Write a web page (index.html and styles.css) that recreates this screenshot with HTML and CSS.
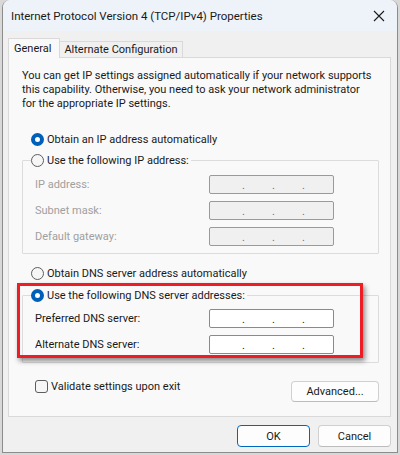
FILE: index.html
```html
<!DOCTYPE html>
<html lang="en">
<head>
    <meta charset="UTF-8">
    <meta name="viewport" content="width=device-width, initial-scale=1.0">
    <title>Internet Protocol Version 4 (TCP/IPv4) Properties</title>
    <link rel="stylesheet" href="styles.css">
</head>
<body>
    <div class="window">
        <div class="titlebar">
            <span class="title">Internet Protocol Version 4 (TCP/IPv4) Properties</span>
            <svg class="close" width="12" height="12" viewBox="0 0 12 12">
                <path d="M1 1L11 11M11 1L1 11" stroke="#1b1b1b" stroke-width="1.1" fill="none"/>
            </svg>
        </div>

        <div class="content">
            <div class="tabs">
                <div class="tab active">General</div>
                <div class="tab">Alternate Configuration</div>
            </div>

            <div class="panel">
                <p class="desc">You can get IP settings assigned automatically if your network supports<br>this capability. Otherwise, you need to ask your network administrator<br>for the appropriate IP settings.</p>

                <div class="option first"><span class="radio checked"></span>Obtain an IP address automatically</div>

                <fieldset class="group disabled">
                    <legend><span class="radio"></span>Use the following IP address:</legend>
                    <div class="field">
                        <span class="label">IP address:</span>
                        <span class="ip"><i>.</i><i>.</i><i>.</i></span>
                    </div>
                    <div class="field">
                        <span class="label">Subnet mask:</span>
                        <span class="ip"><i>.</i><i>.</i><i>.</i></span>
                    </div>
                    <div class="field">
                        <span class="label">Default gateway:</span>
                        <span class="ip"><i>.</i><i>.</i><i>.</i></span>
                    </div>
                </fieldset>

                <div class="option dns"><span class="radio"></span>Obtain DNS server address automatically</div>

                <fieldset class="group dns-group">
                    <legend><span class="radio checked"></span>Use the following DNS server addresses:</legend>
                    <div class="field">
                        <span class="label">Preferred DNS server:</span>
                        <span class="ip"><i>.</i><i>.</i><i>.</i></span>
                    </div>
                    <div class="field">
                        <span class="label">Alternate DNS server:</span>
                        <span class="ip"><i>.</i><i>.</i><i>.</i></span>
                    </div>
                </fieldset>

                <div class="panel-footer">
                    <div class="check-row"><span class="checkbox"></span>Validate settings upon exit</div>
                    <button class="btn advanced">Advanced...</button>
                </div>
            </div>

            <div class="buttons">
                <button class="btn primary">OK</button>
                <button class="btn">Cancel</button>
            </div>
        </div>

        <!-- annotation box around the DNS section -->
        <div class="highlight"></div>
    </div>
</body>
</html>
```

FILE: styles.css
```css
body {
    margin: 0;
    padding: 0;
    background-color: #d8d8d8;
    font-family: Roboto, "Noto Sans", sans-serif;
    font-size: 11px;
    color: #1a1a1a;
}

.window {
    position: relative;
    margin-left: 2px;
    width: 394px;
    height: 452px;
    background-color: #f0f0f0;
    border: 1px solid #8c8c8c;
    border-top: none;
    border-radius: 8px 8px 0 0;
    overflow: hidden;
}

.titlebar {
    height: 31px;
    background-color: #eef3f9;
    display: flex;
    align-items: center;
    justify-content: space-between;
    padding: 0 8px 0 8px;
}

.title {
    font-size: 11.5px;
    padding-top: 1px;
}

.close {
    margin-right: 4px;
    margin-top: 1px;
}

.content {
    padding: 7px 6px 0 5px;
}

.tabs {
    display: flex;
    align-items: flex-end;
    height: 19px;
}

.tab {
    height: 16px;
    line-height: 16px;
    padding: 0 4px 0 4px;
    border: 1px solid #d9d9d9;
    border-bottom: none;
    border-left: none;
    background-color: #f0f0f0;
    box-sizing: border-box;
}

.tab.active {
    position: relative;
    z-index: 1;
    height: 20px;
    line-height: 19px;
    margin-bottom: -1px;
    padding: 0 8px 0 5px;
    border-left: 1px solid #d9d9d9;
    background-color: #f9f9f9;
}

.panel {
    height: 360px;
    box-sizing: border-box;
    border: 1px solid #d9d9d9;
    background-color: #f9f9f9;
    padding: 11px 11px 0 13px;
}

.desc {
    margin: 0;
    line-height: 14px;
    white-space: nowrap;
}

.option {
    display: flex;
    align-items: center;
    height: 16px;
    padding-left: 9px;
}

.option.first {
    margin-top: 20px;
}

.option.dns {
    margin-top: 11px;
}

.radio {
    width: 13px;
    height: 13px;
    box-sizing: border-box;
    border-radius: 50%;
    border: 1px solid #5d5d5d;
    background-color: #f6f6f6;
    margin-right: 3px;
    flex-shrink: 0;
}

.radio.checked {
    border: 4px solid #005fb8;
    background-color: #ffffff;
}

.group {
    margin: 5px 0 0 0;
    padding: 0 0 7px 0;
    border: 1px solid #dcdcdc;
    border-radius: 1px;
}

.group legend {
    display: flex;
    align-items: center;
    height: 16px;
    margin-left: 8px;
    padding: 0 2px 0 0;
}

.group.dns-group {
    margin-top: 6px;
    padding-bottom: 8px;
}

.field {
    display: flex;
    align-items: center;
    height: 19px;
    padding-left: 12px;
    margin-top: 7px;
}

.group.dns-group .field:first-of-type {
    margin-top: 6px;
}

.label {
    width: 174px;
}

.ip {
    width: 125px;
    height: 19px;
    box-sizing: border-box;
    border: 1px solid #8a8a8a;
    border-radius: 2px;
    background-color: #ffffff;
    display: flex;
    align-items: center;
    padding: 2px 0 0 32px;
    gap: 27px;
}

.ip i {
    font-style: normal;
    width: 3px;
    line-height: 12px;
}

.group.disabled .label {
    color: #a0a0a0;
}

.group.disabled .ip {
    background-color: #f0f0f0;
    border-color: #9a9a9a;
}

.group.disabled .ip i {
    color: #6a6a8a;
}

.panel-footer {
    display: flex;
    justify-content: space-between;
    align-items: flex-start;
    margin-top: 16px;
    padding-left: 13px;
}

.check-row {
    display: flex;
    align-items: center;
    height: 14px;
}

.checkbox {
    width: 13px;
    height: 13px;
    box-sizing: border-box;
    border: 1px solid #5d5d5d;
    border-radius: 3px;
    background-color: #f6f6f6;
    margin-right: 3px;
}

.btn {
    font-family: inherit;
    font-size: inherit;
    color: #1a1a1a;
    background-color: #fdfdfd;
    border: 1px solid #d0d0d0;
    border-bottom-color: #bcbcbc;
    border-radius: 4px;
    padding: 0;
    cursor: pointer;
}

.btn.advanced {
    width: 88px;
    height: 21px;
    margin-top: 2px;
}

.buttons {
    display: flex;
    justify-content: flex-end;
    gap: 8px;
    margin-top: 8px;
}

.buttons .btn {
    width: 73px;
    height: 22px;
}

.btn.primary {
    border-color: #0067c0;
}

.highlight {
    position: absolute;
    left: 14px;
    top: 283px;
    width: 346px;
    height: 75px;
    box-sizing: border-box;
    border: 3px solid #ee1c24;
    box-shadow: 2px 3px 5px rgba(0, 0, 0, 0.45);
}
```
